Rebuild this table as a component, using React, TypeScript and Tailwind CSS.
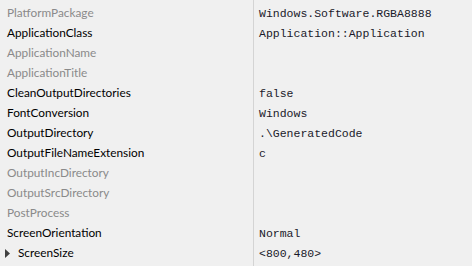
import React from "react";

type Row = { label: string; value?: string; enabled: boolean; expand?: boolean };

const rows: Row[] = [
  { label: "PlatformPackage", value: "Windows.Software.RGBA8888", enabled: false },
  { label: "ApplicationClass", value: "Application::Application", enabled: true },
  { label: "ApplicationName", enabled: false },
  { label: "ApplicationTitle", enabled: false },
  { label: "CleanOutputDirectories", value: "false", enabled: true },
  { label: "FontConversion", value: "Windows", enabled: true },
  { label: "OutputDirectory", value: ".\\GeneratedCode", enabled: true },
  { label: "OutputFileNameExtension", value: "c", enabled: true },
  { label: "OutputIncDirectory", enabled: false },
  { label: "OutputSrcDirectory", enabled: false },
  { label: "PostProcess", enabled: false },
  { label: "ScreenOrientation", value: "Normal", enabled: true },
  { label: "ScreenSize", value: "<800,480>", enabled: true, expand: true },
];

export default function App() {
  return (
    <div className="w-[472px] h-[266px] overflow-hidden bg-[#f0f0f0] flex">
      <div className="w-[253px] shrink-0 pt-[3px] flex flex-col">
        {rows.map((r) => (
          <div
            key={r.label}
            className={`h-[20px] flex items-center text-[11.8px] font-['Lato',sans-serif] ${
              r.enabled ? "text-black" : "text-[#8a8a8a]"
            } ${r.expand ? "pl-[5px]" : "pl-[7px]"}`}
          >
            {r.expand && (
              <svg width="5" height="9" viewBox="0 0 5 9" className="mr-[8px]">
                <path d="M0 0 L5 4.5 L0 9 Z" fill="#404040" />
              </svg>
            )}
            <span className="leading-none">{r.label}</span>
          </div>
        ))}
      </div>
      <div className="w-px bg-[#d4d4d4] shrink-0" />
      <div className="flex-1 pt-[4px] flex flex-col pl-[5px]">
        {rows.map((r) => (
          <div
            key={r.label}
            className="h-[20px] flex items-center text-[11.5px] font-['Liberation_Mono',monospace] text-[#1a1a2a]"
          >
            <span className="leading-none">{r.value ?? ""}</span>
          </div>
        ))}
      </div>
    </div>
  );
}
